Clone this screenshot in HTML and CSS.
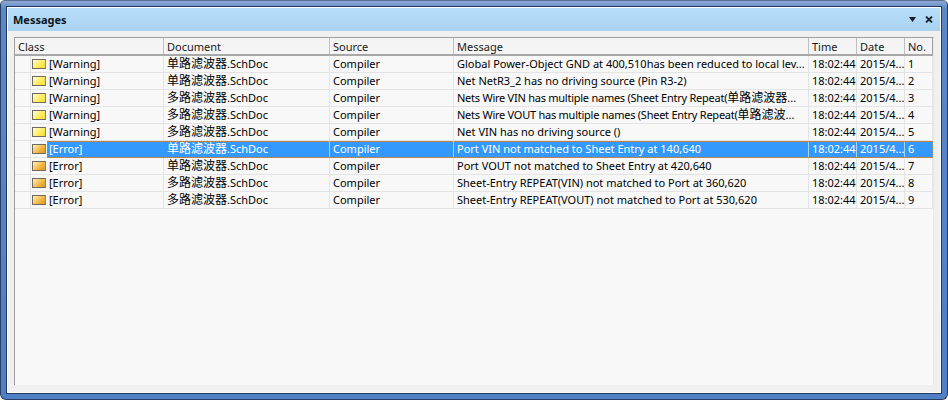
FILE: index.html
```html
<!DOCTYPE html>
<html>
<head>
<meta charset="utf-8">
<title>Messages</title>
<link rel="stylesheet" href="styles.css">
</head>
<body>
<div class="frame">
  <div class="inner">
    <div class="titlebar">
      <span class="title">Messages</span>
      <span class="controls">
        <svg class="ctl" width="7" height="5" viewBox="0 0 7 5"><path d="M0 0h7L3.5 5z" fill="#141c28"/></svg>
        <svg class="ctl" width="8" height="7" viewBox="0 0 8 7"><path d="M1 .6l6 5.8M7 .6L1 6.4" stroke="#1a2430" stroke-width="1.9" fill="none"/></svg>
      </span>
    </div>
    <div class="panel">
      <div class="list">
        <div class="row head">
          <div class="cell">Class</div><div class="cell">Document</div><div class="cell">Source</div><div class="cell">Message</div><div class="cell">Time</div><div class="cell">Date</div><div class="cell">No.</div>
        </div>
        <div class="row">
          <div class="cell cls"><span class="ico warn"></span><span class="lbl">[Warning]</span></div><div class="cell"><span class="cjk">单路滤波器</span>.SchDoc</div><div class="cell">Compiler</div><div class="cell">Global Power-Object GND at 400,510has been reduced to local lev...</div><div class="cell">18:02:44</div><div class="cell">2015/4...</div><div class="cell">1</div>
        </div>
        <div class="row">
          <div class="cell cls"><span class="ico warn"></span><span class="lbl">[Warning]</span></div><div class="cell"><span class="cjk">单路滤波器</span>.SchDoc</div><div class="cell">Compiler</div><div class="cell">Net NetR3_2 has no driving source (Pin R3-2)</div><div class="cell">18:02:44</div><div class="cell">2015/4...</div><div class="cell">2</div>
        </div>
        <div class="row">
          <div class="cell cls"><span class="ico warn"></span><span class="lbl">[Warning]</span></div><div class="cell"><span class="cjk">多路滤波器</span>.SchDoc</div><div class="cell">Compiler</div><div class="cell"><span class="tight">Nets Wire VIN has multiple names (Sheet Entry Repeat(</span><span class="cjk">单路滤波器</span>...</div><div class="cell">18:02:44</div><div class="cell">2015/4...</div><div class="cell">3</div>
        </div>
        <div class="row">
          <div class="cell cls"><span class="ico warn"></span><span class="lbl">[Warning]</span></div><div class="cell"><span class="cjk">多路滤波器</span>.SchDoc</div><div class="cell">Compiler</div><div class="cell"><span class="tight">Nets Wire VOUT has multiple names (Sheet Entry Repeat(</span><span class="cjk">单路滤波</span>...</div><div class="cell">18:02:44</div><div class="cell">2015/4...</div><div class="cell">4</div>
        </div>
        <div class="row">
          <div class="cell cls"><span class="ico warn"></span><span class="lbl">[Warning]</span></div><div class="cell"><span class="cjk">多路滤波器</span>.SchDoc</div><div class="cell">Compiler</div><div class="cell">Net VIN has no driving source ()</div><div class="cell">18:02:44</div><div class="cell">2015/4...</div><div class="cell">5</div>
        </div>
        <div class="row selected">
          <div class="cell cls"><span class="ico err"></span><span class="lbl">[Error]</span></div><div class="cell"><span class="cjk">单路滤波器</span>.SchDoc</div><div class="cell">Compiler</div><div class="cell">Port VIN not matched to Sheet Entry at 140,640</div><div class="cell">18:02:44</div><div class="cell">2015/4...</div><div class="cell">6</div>
        </div>
        <div class="row">
          <div class="cell cls"><span class="ico err"></span><span class="lbl">[Error]</span></div><div class="cell"><span class="cjk">单路滤波器</span>.SchDoc</div><div class="cell">Compiler</div><div class="cell">Port VOUT not matched to Sheet Entry at 420,640</div><div class="cell">18:02:44</div><div class="cell">2015/4...</div><div class="cell">7</div>
        </div>
        <div class="row">
          <div class="cell cls"><span class="ico err"></span><span class="lbl">[Error]</span></div><div class="cell"><span class="cjk">多路滤波器</span>.SchDoc</div><div class="cell">Compiler</div><div class="cell">Sheet-Entry REPEAT(VIN) not matched to Port at 360,620</div><div class="cell">18:02:44</div><div class="cell">2015/4...</div><div class="cell">8</div>
        </div>
        <div class="row">
          <div class="cell cls"><span class="ico err"></span><span class="lbl">[Error]</span></div><div class="cell"><span class="cjk">多路滤波器</span>.SchDoc</div><div class="cell">Compiler</div><div class="cell">Sheet-Entry REPEAT(VOUT) not matched to Port at 530,620</div><div class="cell">18:02:44</div><div class="cell">2015/4...</div><div class="cell">9</div>
        </div>
      </div>
    </div>
  </div>
</div>
</body>
</html>
```
FILE: styles.css
```css
* { box-sizing: border-box; }
html, body { margin: 0; padding: 0; }
body {
  width: 948px;
  height: 400px;
  overflow: hidden;
  background: #fff;
  font-family: "Noto Sans", "Noto Sans CJK SC", sans-serif;
  font-size: 11px;
  color: #000;
}
.frame {
  width: 948px;
  height: 400px;
  padding: 5px;
  background: linear-gradient(#8ea9d2, #5a88c8 8px, #4f7fc4);
  border: 1px solid #2a3f66;
  border-top-color: #5a6f96;
  border-radius: 5px 5px 6px 6px;
}
.inner {
  height: 100%;
  display: flex;
  flex-direction: column;
  border: 1px solid #26385c;
  background: #f0f0f0;
  box-shadow: inset 0 0 0 1px #fff;
}
.titlebar {
  height: 23px;
  margin: 1px 1px 0;
  flex: none;
  display: flex;
  align-items: center;
  justify-content: space-between;
  padding: 0 7px 0 5px;
  background: linear-gradient(#b8dffa, #a9d2ef);
}
.title { font-weight: 700; font-size: 11px; color: #0a1420; }
.controls { display: flex; align-items: center; gap: 9px; }
.ctl { display: block; }
.panel {
  flex: 1;
  min-height: 0;
  margin: 0 1px 1px;
  padding: 6px 6px 7px;
  background: #f0f0f0;
}
.list {
  height: 100%;
  background: #f8f8f8;
  border-top: 1px solid #a0a0a0;
  border-left: 1px solid #a0a0a0;
  border-right: 1px solid #e8e8e8;
}
.row {
  display: grid;
  grid-template-columns: 149px 166px 124px 355px 48px 48px 28px;
  height: 17px;
  line-height: 16px;
  border-bottom: 1px solid #e4e4e4;
}
.head {
  height: 18px;
  line-height: 17px;
  background: #f4f4f4;
  border-bottom: 2px solid #a8a8a8;
  color: #1a1a1a;
}
.cell {
  padding-left: 3px;
  white-space: nowrap;
  overflow: hidden;
  border-right: 1px solid #e4e4e4;
}
.head .cell { border-right: 1px solid #c0c0c0; }
.head .cell:last-child { border-right-color: #a0a0a0; }
.cjk { font-size: 12px; }
.tight { letter-spacing: -0.25px; }
.cls {
  display: flex;
  align-items: center;
  padding-left: 17px;
  background: linear-gradient(#e4e4e4, #e4e4e4) 15px 0 / 1px 100% no-repeat;
}
.ico {
  flex: none;
  width: 14px;
  height: 10px;
  border: 1px solid #6f6a5c;
  border-right-color: #888;
  margin-right: 3px;
}
.warn { background: linear-gradient(135deg, #fffde0, #ffee60 55%, #f5d93a); }
.err { background: linear-gradient(135deg, #fff0c0, #f6bf52 50%, #dd9418); }
.lbl { display: block; }
.selected { position: relative; background: #3399ff; color: #fff; border-bottom-color: #3399ff; }
.selected .cell { border-right-color: #a9d3ff; }
.selected .cell.cls {
  border-right-color: #3399ff;
  background:
    linear-gradient(#e4e4e4, #e4e4e4) 15px 0 / 1px 100% no-repeat,
    linear-gradient(to right, #f8f8f8 32px, #3399ff 32px);
}
.selected .cell:last-child { border-right-color: #3399ff; }
.selected::before {
  content: "";
  position: absolute;
  left: 0;
  bottom: -1px;
  width: 32px;
  height: 1px;
  background: #e4e4e4;
}
.selected::after {
  content: "";
  position: absolute;
  left: 32px;
  right: 0;
  top: 0;
  bottom: -1px;
  border: 1px dotted #c8894a;
}
```
